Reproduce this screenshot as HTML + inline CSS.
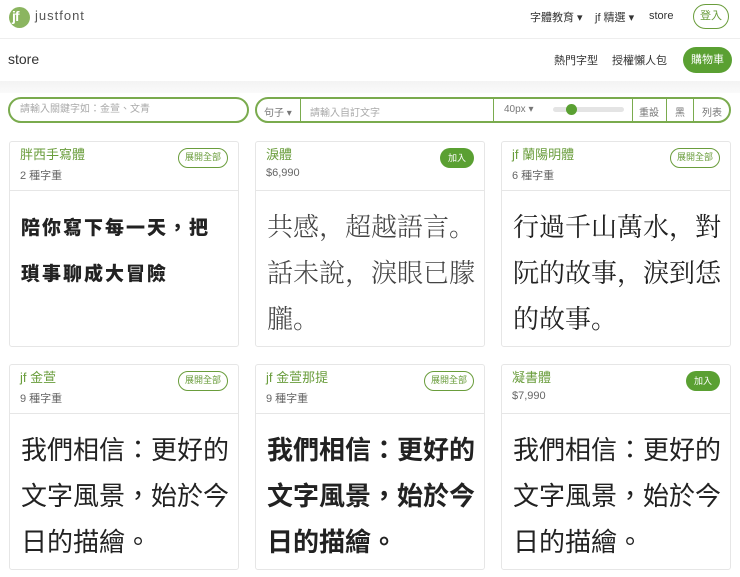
<!DOCTYPE html>
<html><head><meta charset="utf-8"><style>
*{box-sizing:border-box;margin:0;padding:0}
body{width:740px;height:577px;overflow:hidden;background:#fff;font-family:"Liberation Sans","Noto Sans CJK TC",sans-serif;color:#333;position:relative}
.a{position:absolute;white-space:nowrap}
.card{position:absolute;width:230px;height:206px;border:1px solid #e6e6e6;border-radius:3px;background:#fff;overflow:hidden}
.card .hd{height:49px;border-bottom:1px solid #e6e6e6;position:relative}
.card .t{position:absolute;left:10px;top:2px;font-size:13px;color:#6a9d3c}
.card .s{position:absolute;left:10px;top:25px;font-size:11px;color:#666}
.card .b{position:absolute;right:10px;top:6px;height:20px;border:1.5px solid #6a9d3c;border-radius:10px;font-size:9px;color:#6a9d3c;padding:0 6px;line-height:17px}
.card .add{position:absolute;right:10px;top:6px;height:20px;background:#5aa032;border-radius:10px;font-size:9px;color:#fff;padding:0 8px;line-height:20px}
.card .bd{padding:12px 0 0 11px;font-size:26px;line-height:46px;color:#222;font-family:"Noto Serif CJK SC","Liberation Serif",serif;white-space:nowrap}
.sans{font-family:"Noto Sans CJK TC",sans-serif!important}
</style></head><body>
<div class="a" style="left:9px;top:7px;width:21px;height:21px;border-radius:50%;background:#8bb560"></div>
<div class="a" style="left:12px;top:8px;font-size:14px;color:#fff;font-weight:bold;letter-spacing:-1px">jf</div>
<div class="a" style="left:35px;top:8px;font-size:13px;color:#555;letter-spacing:1px">justfont</div>
<div class="a" style="left:530px;top:9px;font-size:11px;color:#333">字體教育 ▾</div>
<div class="a" style="left:595px;top:9px;font-size:11px;color:#333">jf 精選 ▾</div>
<div class="a" style="left:649px;top:10px;font-size:11px;color:#333">store</div>
<div class="a" style="left:693px;top:4px;width:36px;height:25px;border:1.5px solid #6a9d3c;border-radius:13px;font-size:11px;color:#6a9d3c;text-align:center;line-height:22px">登入</div>
<div class="a" style="left:0;top:38px;width:740px;height:1px;background:#eee"></div>
<div class="a" style="left:8px;top:51px;font-size:14px;color:#333">store</div>
<div class="a" style="left:554px;top:52px;font-size:11px;color:#333">熱門字型</div>
<div class="a" style="left:612px;top:52px;font-size:11px;color:#333">授權懶人包</div>
<div class="a" style="left:683px;top:47px;width:49px;height:26px;border-radius:13px;background:#5aa032;color:#fff;font-size:11px;text-align:center;line-height:26px">購物車</div>
<div class="a" style="left:0;top:81px;width:740px;height:12px;background:linear-gradient(#f3f3f3,#fafafa)"></div>
<div class="a" style="left:8px;top:97px;width:241px;height:26px;border:2px solid #7aab4e;border-radius:13px;font-size:10px;color:#aaa;line-height:22px;padding-left:10px">請輸入關鍵字如：金萱、文青</div>
<div class="a" style="left:255px;top:97px;width:476px;height:26px;border:2px solid #7aab4e;border-radius:13px"></div>
<div class="a" style="left:264px;top:104px;font-size:10px;color:#777">句子 ▾</div>
<div class="a" style="left:300px;top:99px;width:1px;height:22px;background:#7aab4e"></div>
<div class="a" style="left:310px;top:104px;font-size:10px;color:#aaa">請輸入自訂文字</div>
<div class="a" style="left:493px;top:99px;width:1px;height:22px;background:#7aab4e"></div>
<div class="a" style="left:504px;top:104px;font-size:10px;color:#777">40px ▾</div>
<div class="a" style="left:553px;top:107px;width:71px;height:5px;border-radius:3px;background:#e4e4e4"></div>
<div class="a" style="left:566px;top:104px;width:11px;height:11px;border-radius:50%;background:#5aa032"></div>
<div class="a" style="left:632px;top:99px;width:1px;height:22px;background:#7aab4e"></div>
<div class="a" style="left:639px;top:104px;font-size:10px;color:#777">重設</div>
<div class="a" style="left:666px;top:99px;width:1px;height:22px;background:#7aab4e"></div>
<div class="a" style="left:675px;top:104px;font-size:10px;color:#777">黑</div>
<div class="a" style="left:693px;top:99px;width:1px;height:22px;background:#7aab4e"></div>
<div class="a" style="left:702px;top:104px;font-size:10px;color:#777">列表</div>

<div class="card" style="left:9px;top:141px"><div class="hd"><div class="t">胖西手寫體</div><div class="s">2 種字重</div><div class="b">展開全部</div></div>
<div class="bd sans" style="font-size:19px;font-weight:900;padding-top:13px;letter-spacing:2px">陪你寫下每一天，把<br>瑣事聊成大冒險</div></div>
<div class="card" style="left:255px;top:141px"><div class="hd"><div class="t">淚體</div><div class="s">$6,990</div><div class="add">加入</div></div>
<div class="bd" style="color:#444;font-weight:300">共感，超越語言。<br>話未說，淚眼已朦<br>朧。</div></div>
<div class="card" style="left:501px;top:141px"><div class="hd"><div class="t">jf 蘭陽明體</div><div class="s">6 種字重</div><div class="b">展開全部</div></div>
<div class="bd">行過千山萬水，對<br>阮的故事，淚到恁<br>的故事。</div></div>

<div class="card" style="left:9px;top:364px"><div class="hd"><div class="t">jf 金萱</div><div class="s">9 種字重</div><div class="b">展開全部</div></div>
<div class="bd sans">我們相信：更好的<br>文字風景，始於今<br>日的描繪。</div></div>
<div class="card" style="left:255px;top:364px"><div class="hd"><div class="t">jf 金萱那提</div><div class="s">9 種字重</div><div class="b">展開全部</div></div>
<div class="bd sans" style="font-weight:bold">我們相信：更好的<br>文字風景，始於今<br>日的描繪。</div></div>
<div class="card" style="left:501px;top:364px"><div class="hd"><div class="t">凝書體</div><div class="s">$7,990</div><div class="add">加入</div></div>
<div class="bd sans">我們相信：更好的<br>文字風景，始於今<br>日的描繪。</div></div>
</body></html>
